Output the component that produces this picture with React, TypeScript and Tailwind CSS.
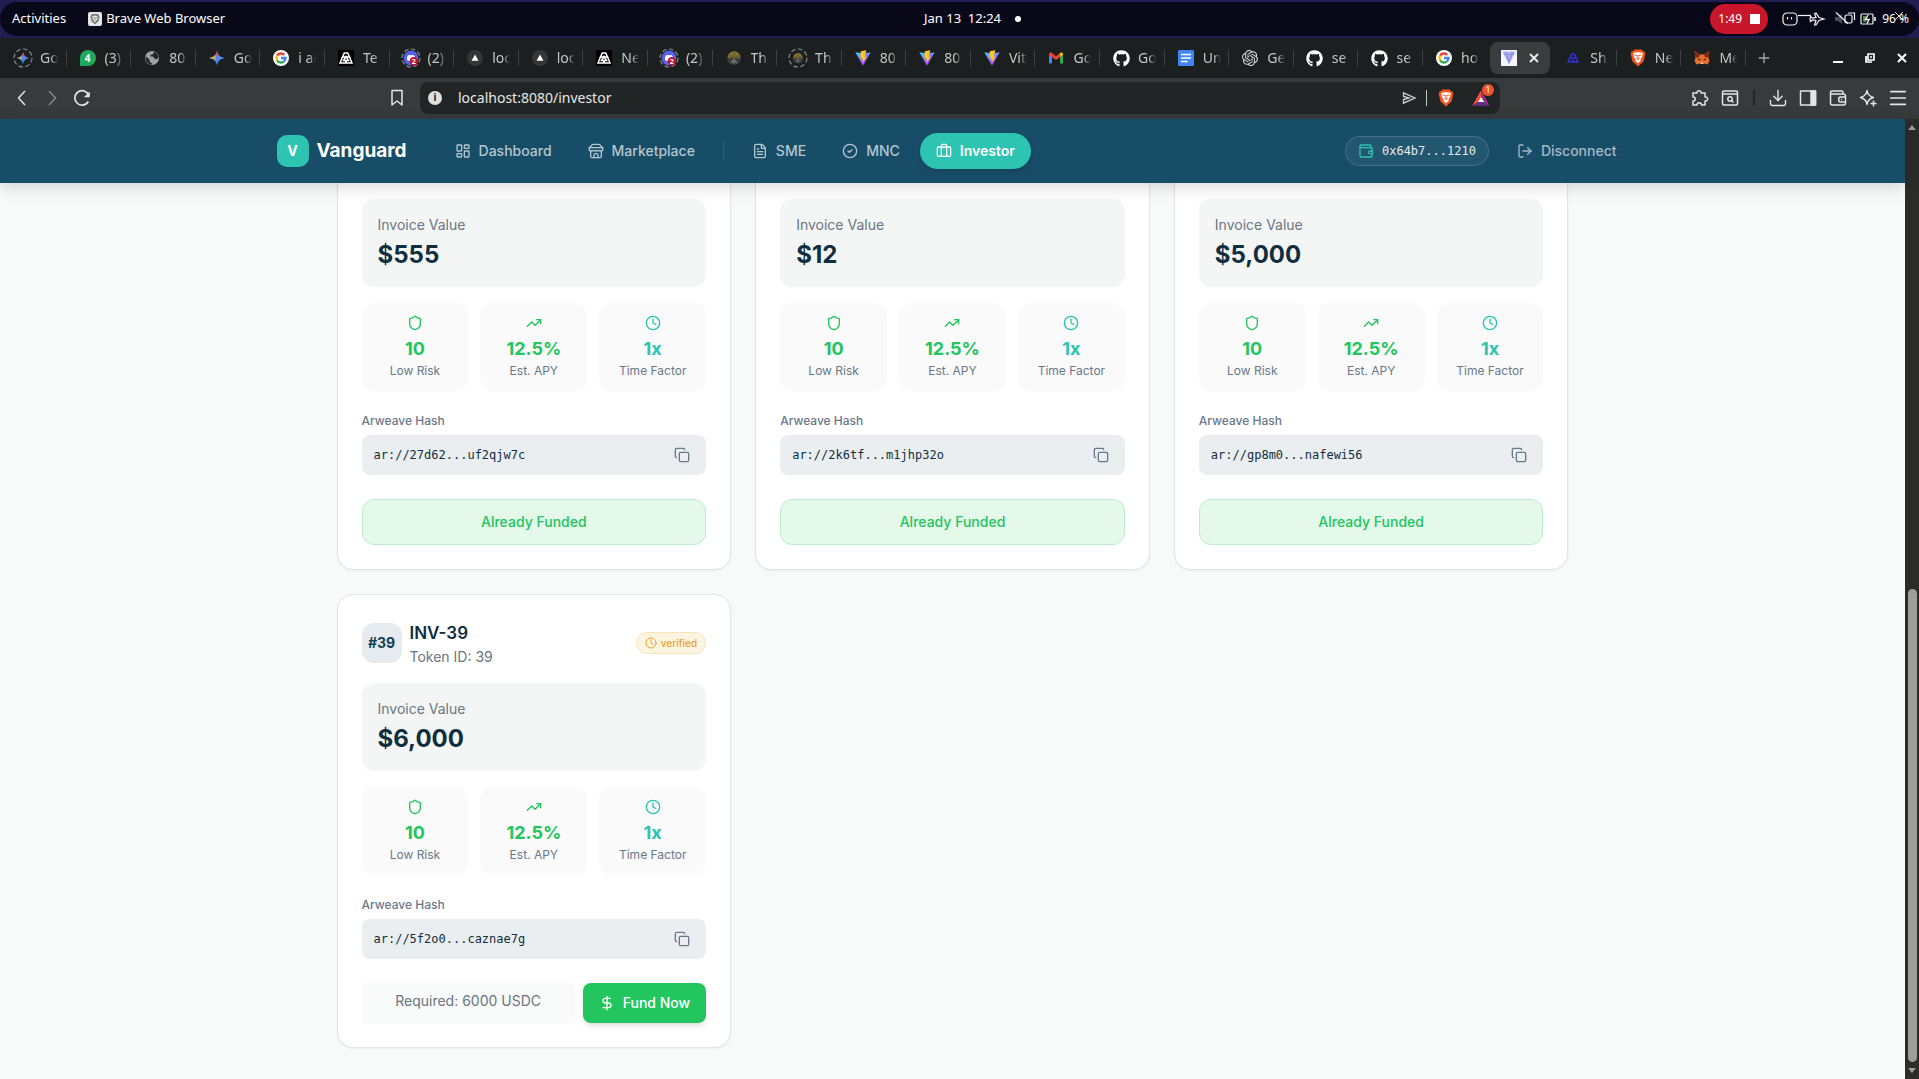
import type { ReactNode } from "react";
import {
    BadgeCheck,
    Briefcase,
    CircleCheck,
    Clock,
    Copy,
    DollarSign,
    Download,
    FileText,
    LayoutDashboard,
    LogOut,
    Menu,
    Plus,
    Shield,
    TrendingUp,
    Wallet,
} from "lucide-react";
import { FaGithub } from "react-icons/fa";
import { SiOpenai } from "react-icons/si";
import clsx from "clsx";

const UI_FONT = "font-['Noto_Sans',sans-serif]";
const MONO_FONT = "font-['DejaVu_Sans_Mono',monospace]";

/* ---------- favicons ---------- */

const LoadingRing = ({ children }: { children: ReactNode }) => (
    <svg viewBox="0 0 20 20" className="size-5">
        <circle cx="10" cy="10" r="9" fill="none" stroke="#85898b" strokeWidth="1.2" strokeDasharray="4.6 2.4" />
        {children}
    </svg>
);

const GEMINI_PATH = "M8 0C8.8 4.8 11.2 7.2 16 8C11.2 8.8 8.8 11.2 8 16C7.2 11.2 4.8 8.8 0 8C4.8 7.2 7.2 4.8 8 0Z";

const GeminiDefs = ({ id }: { id: string }) => (
    <defs>
        <linearGradient id={id} x1="0.5" y1="0" x2="0.6" y2="1">
            <stop offset="0.15" stopColor="#e8453c" />
            <stop offset="0.45" stopColor="#5b84ee" />
            <stop offset="0.75" stopColor="#3c8bf0" />
            <stop offset="1" stopColor="#27a567" />
        </linearGradient>
    </defs>
);

const GeminiIcon = () => (
    <svg viewBox="0 0 16 16" className="size-4">
        <GeminiDefs id="gemini" />
        <path d={GEMINI_PATH} fill="url(#gemini)" />
        <path d="M0 8C3 7.5 5 6.3 6.3 5L6.8 8L6.3 10.5C5 9.2 3 8.4 0 8Z" fill="#e5b52c" opacity="0.8" />
    </svg>
);

const GeminiLoadingIcon = () => (
    <LoadingRing>
        <GeminiDefs id="gemini-loading" />
        <path d={GEMINI_PATH} transform="translate(3.6 3.6) scale(0.8)" fill="url(#gemini-loading)" />
        <path d="M4 10C6 9.7 7.5 9 8.6 8L9 10L8.6 12C7.5 11 6 10.3 4 10Z" fill="#e5b52c" opacity="0.8" />
    </LoadingRing>
);

const WhatsAppIcon = () => (
    <span className="flex size-4 items-center justify-center rounded-full rounded-bl-xs bg-[#1fa95b] text-[10px] font-bold text-white">
        4
    </span>
);

const GlobeIcon = () => (
    <svg viewBox="0 0 16 16" className="size-4">
        <circle cx="8" cy="8" r="7" fill="#9ea1a3" />
        <path
            d="M2 6.5L5.5 9.5V11.5L8 13.5V14.5C4.5 14.5 1.8 12 1.5 8.5Z M10 1.8C12.5 2.6 14.2 4.7 14.5 7.2L12.5 9.5L10.5 8.5L9 6.5H6.5V5L9 4.2Z"
            fill="#222628"
        />
    </svg>
);

const GoogleIcon = () => (
    <svg viewBox="0 0 16 16" className="size-4">
        <circle cx="8" cy="8" r="8" fill="#fff" />
        <g fill="none" strokeWidth="2.4">
            <path d="M4.1 5.7A4.5 4.5 0 0 1 11.3 4.9" stroke="#ea4335" />
            <path d="M4.1 10.3A4.5 4.5 0 0 1 4.1 5.7" stroke="#fbbc05" />
            <path d="M11 11.4A4.5 4.5 0 0 1 4.1 10.3" stroke="#34a853" />
            <path d="M8 8H12.5A4.5 4.5 0 0 1 11 11.4" stroke="#4285f4" />
        </g>
    </svg>
);

const TriangleFrameIcon = () => (
    <svg viewBox="0 0 16 16" className="size-4">
        <rect width="16" height="16" fill="#000" />
        <g fill="none" stroke="#fff" strokeWidth="1.5">
            <path d="M6.3 3H9.7L11.5 7H4.5Z" />
            <path d="M4.5 7L2 13H7.5L8 10.5L8.5 13H14L11.5 7" />
            <path d="M8 6.5L5.5 10.5H10.5Z" />
        </g>
    </svg>
);

const DiscordIcon = () => (
    <LoadingRing>
        <circle cx="10" cy="10" r="7.4" fill="#5563ea" />
        <path d="M6 12C5.7 9.5 6.5 7.5 7.5 7L10 7.3L12.5 7C13.5 7.5 14.3 9.5 14 12L12 13H8Z" fill="#fff" />
        <circle cx="12.8" cy="13.3" r="4.2" fill="#c8102e" />
        <text x="12.8" y="15.9" fontSize="7" fontWeight="700" textAnchor="middle" fill="#fff">2</text>
    </LoadingRing>
);

const VercelIcon = () => (
    <svg viewBox="0 0 16 16" className="size-4">
        <circle cx="8" cy="8" r="8" fill="#343536" />
        <path d="M8 4.5L11.5 10.8H4.5Z" fill="#fff" />
    </svg>
);

const TreeShape = () => (
    <>
        <circle cx="8" cy="8" r="7" fill="#3b3d3c" />
        <path d="M2 7.5C2 3.5 5 1.5 8 1.5S14 3.5 14 7.5C12.5 9 10.5 8.5 8 8.5S3.5 9 2 7.5Z" fill="#85762d" />
        <path d="M4 5L8 9L12 5M8 3V9M3 7L8 9.5L13 7" fill="none" stroke="#37382c" strokeWidth="0.8" />
        <path d="M8 8V14M5 13L8 10L11 13" fill="none" stroke="#74777b" strokeWidth="1.3" />
    </>
);

const TreeIcon = () => (
    <svg viewBox="0 0 16 16" className="size-4">
        <TreeShape />
    </svg>
);

const TreeLoadingIcon = () => (
    <LoadingRing>
        <g transform="translate(4 4) scale(0.75)">
            <TreeShape />
        </g>
    </LoadingRing>
);

const ViteIcon = () => (
    <svg viewBox="0 0 16 16" className="size-4">
        <defs>
            <linearGradient id="vite" x1="0" y1="0" x2="0.6" y2="1">
                <stop offset="0" stopColor="#41d1ff" />
                <stop offset="1" stopColor="#bd34fe" />
            </linearGradient>
        </defs>
        <path d="M0.3 2.2L8 15.8L15.7 2.2L8.5 3.5Z" fill="url(#vite)" />
        <path d="M11.4 0.2L5.8 1.3L5.4 7.7L7.2 7.3L6.7 10L8.2 9.6L7.5 13.2L11.6 6.5L9.8 6.8Z" fill="#ffc71f" />
    </svg>
);

const FadedViteIcon = () => (
    <svg viewBox="0 0 16 16" className="size-4">
        <rect width="16" height="16" fill="#f4f4fc" />
        <path d="M1.5 1.5H14.5L8 14.5Z" fill="#b9a9ee" />
        <path d="M4.5 2L8 12L11.5 2M3 4.5H13" fill="none" stroke="#7e9cdc" strokeWidth="1.2" />
    </svg>
);

const GmailIcon = () => (
    <svg viewBox="0 0 16 16" className="size-4">
        <path d="M1 4V13.5H4V7Z" fill="#4285f4" />
        <path d="M15 4V13.5H12V7Z" fill="#34a853" />
        <path d="M1 3.5C1.5 2.3 3 2.3 4 3L8 6.2L12 3V7L8 10L4 7L1 5Z" fill="#ea4335" />
        <path d="M12 3C13 2.3 14.5 2.3 15 3.5V5L12 7Z" fill="#fbbc04" />
    </svg>
);

const DocsIcon = () => (
    <svg viewBox="0 0 16 16" className="size-4">
        <rect width="16" height="16" rx="1.5" fill="#4285f4" />
        <path d="M3 4.5H13M3 8H13M3 11.5H9.5" stroke="#fff" strokeWidth="1.6" />
    </svg>
);

const BraveIcon = () => (
    <svg viewBox="0 0 16 18" className="h-[18px] w-4">
        <path d="M4.5 0.5H11.5L13.2 2.2L14.6 2.4L15.3 5L13.5 12.5L8 17.5L2.5 12.5L0.7 5L1.4 2.4L2.8 2.2Z" fill="#f2541b" />
        <path d="M8 3L12.8 4L12 8.2L10.5 10L10.8 11.5L8 14.3L5.2 11.5L5.5 10L4 8.2L3.2 4Z" fill="#fff" />
        <path d="M4.5 5.8L7 6.6M11.5 5.8L9 6.6M8 6V10.5M6.3 9L8 10.5L9.7 9" fill="none" stroke="#f2541b" />
    </svg>
);

const BlueTriangleIcon = () => (
    <svg viewBox="0 0 16 16" className="size-4" fill="none" stroke="#2d35d8" strokeWidth="1.6">
        <path d="M6.8 4H9.2L11 8H5Z" />
        <path d="M5 8L3.2 12H7.2L8 10.5L8.8 12H12.8L11 8" />
    </svg>
);

const MetaMaskIcon = () => (
    <svg viewBox="0 0 16 16" className="size-4">
        <path d="M0.5 1L6 4.5H10L15.5 1L14.5 8L15.5 11L13.5 14.5L10 13.5H6L2.5 14.5L0.5 11L1.5 8Z" fill="#ec6f2d" />
        <path d="M0.5 1L6 4.5L5 7L1.5 8Z M15.5 1L10 4.5L11 7L14.5 8Z" fill="#7b2d1a" />
        <path d="M4 9L6.5 10M12 9L9.5 10" stroke="#252525" strokeWidth="1.2" />
        <path d="M6.5 12.5H9.5V14H6.5Z" fill="#d9c6ba" />
    </svg>
);

const GithubIcon = () => <FaGithub className="size-[17px] text-white" />;
const OpenAiIcon = () => <SiOpenai className="size-4 text-[#d5d7d8]" />;

/* ---------- browser chrome ---------- */

type BrowserTab = {
    title: string;
    icon: () => ReactNode;
};

const TABS_LEFT: BrowserTab[] = [
    { title: "Go", icon: GeminiLoadingIcon },
    { title: "(3)", icon: WhatsAppIcon },
    { title: "80", icon: GlobeIcon },
    { title: "Go", icon: GeminiIcon },
    { title: "i ar", icon: GoogleIcon },
    { title: "Te", icon: TriangleFrameIcon },
    { title: "(2)", icon: DiscordIcon },
    { title: "loc", icon: VercelIcon },
    { title: "loc", icon: VercelIcon },
    { title: "Ne", icon: TriangleFrameIcon },
    { title: "(2)", icon: DiscordIcon },
    { title: "Th", icon: TreeIcon },
    { title: "Th", icon: TreeLoadingIcon },
    { title: "80", icon: ViteIcon },
    { title: "80", icon: ViteIcon },
    { title: "Vit", icon: ViteIcon },
    { title: "Go", icon: GmailIcon },
    { title: "Go", icon: GithubIcon },
    { title: "Un", icon: DocsIcon },
    { title: "Ge", icon: OpenAiIcon },
    { title: "se", icon: GithubIcon },
    { title: "se", icon: GithubIcon },
    { title: "ho", icon: GoogleIcon },
];

const TABS_RIGHT: BrowserTab[] = [
    { title: "Sh", icon: BlueTriangleIcon },
    { title: "Ne", icon: BraveIcon },
    { title: "Me", icon: MetaMaskIcon },
];

const CloseGlyph = () => (
    <svg viewBox="0 0 10 10" className="size-2.5" stroke="currentColor" strokeWidth="2">
        <path d="M1 1L9 9M9 1L1 9" />
    </svg>
);

const TabButton = ({ tab, divider = true }: { tab: BrowserTab; divider?: boolean }) => {
    const Icon = tab.icon;
    return (
        <button type="button" className="flex min-w-0 items-center pl-[11px]">
            <span className="flex size-5 shrink-0 items-center justify-center">
                <Icon />
            </span>
            <span className="ml-[7px] w-[18px] overflow-hidden text-left text-sm whitespace-nowrap text-[#c3c5c6] [mask-image:linear-gradient(to_right,#000_60%,transparent)]">
                {tab.title}
            </span>
            {divider && <span className="ml-auto h-4 w-px bg-[#3d4143]" />}
        </button>
    );
};

const SystemBar = () => (
    <div className={clsx("h-[38px] shrink-0 border-y-2 border-[#221c55] bg-[#221c55] text-[13px] text-white", UI_FONT)}>
        <div className="grid h-full grid-cols-[1fr_auto_1fr] items-center rounded-full bg-[#080818] pr-2.5 pl-3">
            <div className="flex items-center gap-[22px]">
                <button type="button">Activities</button>
                <button type="button" className="flex items-center gap-1">
                    <svg viewBox="0 0 14 14" className="size-3.5">
                        <rect width="14" height="14" rx="2" fill="#e6e6e6" />
                        <path d="M4 2H10L11.5 4.5L10.5 9L7 12.5L3.5 9L2.5 4.5Z" fill="#777" />
                        <path d="M7 3.5L10 4.5L9 7.5L7 10.5L5 7.5L4 4.5Z" fill="#eee" />
                        <path d="M5 5.5H6.5M7.5 5.5H9M7 6V8.5" stroke="#777" />
                    </svg>
                    Brave Web Browser
                </button>
            </div>
            <div className="flex items-center gap-3.5 pl-6">
                <span>Jan 13&nbsp; 12:24</span>
                <span className="size-1.5 rounded-full bg-white" />
            </div>
            <div className="flex items-center justify-end">
                <button type="button" className="mr-3.5 flex h-[30px] w-[58px] items-center justify-center gap-2 rounded-full bg-[#c8162b] text-xs">
                    1:49
                    <span className="size-2.5 bg-white" />
                </button>
                <svg viewBox="0 0 96 20" className="mr-1 h-5 w-24" fill="none" stroke="#f2f2f2" strokeWidth="1.2">
                    <rect x="1" y="4" width="14" height="12" rx="4" />
                    <path d="M5.5 8V10.5M9.5 8V10.5" />
                    <path d="M16 6.5H29" />
                    <path d="M42 10L37 8.5L34 4L32.5 4.5L34 8.5L30.5 9L28.5 7.5L28 10L28.5 12.5L30.5 11L34 11.5L32.5 16L34 16L37 11.5Z" />
                    <path d="M53 8H56L60 5V15L56 12H53Z" fill="#4a4b58" stroke="none" />
                    <path d="M54 3.5L66 14.5" />
                    <rect x="63" y="6" width="7" height="8" rx="1.5" />
                    <path d="M66 4H72.5V11" />
                    <rect x="79" y="5" width="12" height="10" rx="1" />
                    <path d="M93 8V12" strokeWidth="1.6" />
                    <path d="M81 7H84V13H81Z" fill="#3b9b38" stroke="none" />
                    <path d="M86 6L83.5 10.5H87L85 14.5" strokeWidth="1.5" />
                </svg>
                <span className="relative text-xs">
                    96 %
                    <svg viewBox="0 0 10 10" className="absolute top-0 left-3 size-2.5" stroke="#ddd" strokeWidth="1">
                        <path d="M1 1L9 9M9 1L1 9" />
                    </svg>
                </span>
            </div>
        </div>
    </div>
);

const TabStrip = () => (
    <div className={clsx("flex h-10 shrink-0 bg-[#1c1f20] pl-0.5", UI_FONT)}>
        <div className="grid min-w-0 flex-1 auto-cols-fr grid-flow-col">
            {TABS_LEFT.map((tab, index) => (
                <TabButton key={index} tab={tab} divider={index < TABS_LEFT.length - 1} />
            ))}
            <button
                type="button"
                aria-label="Vanguard"
                className="mx-0.5 my-1 flex min-w-0 items-center justify-center gap-3 rounded-lg bg-[#3a3d3e] text-[#e8e9e9]"
            >
                <FadedViteIcon />
                <CloseGlyph />
            </button>
            {TABS_RIGHT.map((tab) => (
                <TabButton key={tab.title} tab={tab} />
            ))}
        </div>
        <div className="flex w-[173px] items-center justify-between pr-3">
            <button type="button" aria-label="New tab" className="ml-2.5 text-[#a5a7a8]">
                <Plus className="size-4" />
            </button>
            <div className="flex items-center gap-[22px] text-white">
                <button type="button" aria-label="Minimize" className="flex h-2.5 items-end">
                    <span className="h-0.5 w-2.5 bg-white" />
                </button>
                <button type="button" aria-label="Restore">
                    <svg viewBox="0 0 10 10" className="size-2.5" fill="none" stroke="currentColor" strokeWidth="1.7">
                        <path d="M3 1H9V7H3Z" />
                        <path d="M1 3V9H7" />
                        <path d="M5 4H7" />
                    </svg>
                </button>
                <button type="button" aria-label="Close window">
                    <CloseGlyph />
                </button>
            </div>
        </div>
    </div>
);

const ToolbarIcon = ({ label, children }: { label: string; children: ReactNode }) => (
    <button type="button" aria-label={label} className="flex w-[30px] items-center justify-center">
        <svg viewBox="0 0 18 18" className="size-[18px]" fill="none" stroke="currentColor" strokeWidth="1.5" strokeLinejoin="round">
            {children}
        </svg>
    </button>
);

const Toolbar = () => (
    <div className={clsx("flex h-[41px] shrink-0 items-center bg-[#383b3c] pb-0.5 text-[#e3e4e4]", UI_FONT)}>
        <div className="flex w-[420px] items-center justify-between pr-2 pl-[7px]">
            <div className="flex">
                <ToolbarIcon label="Back">
                    <path d="M12 2L5.5 9L12 16" />
                </ToolbarIcon>
                <ToolbarIcon label="Forward">
                    <path d="M6 2L12.5 9L6 16" stroke="#858889" />
                </ToolbarIcon>
                <ToolbarIcon label="Reload">
                    <path d="M15.3 12.5A7.2 7.2 0 1 1 16 7" strokeWidth="1.7" />
                    <path d="M16.5 3V8H11.5Z" fill="currentColor" strokeWidth="0.5" />
                </ToolbarIcon>
            </div>
            <ToolbarIcon label="Bookmark">
                <path d="M4 1.5H14V16L9 12L4 16Z" />
            </ToolbarIcon>
        </div>
        <div className="flex h-8 min-w-0 flex-1 items-center rounded-lg bg-[#222526] pl-2">
            <span className="flex size-3.5 items-center justify-center rounded-full bg-[#dedfdf] text-[10px] font-bold text-[#222526]">
                i
            </span>
            <input
                aria-label="Address"
                defaultValue="localhost:8080/investor"
                className="ml-4 min-w-0 flex-1 bg-transparent text-sm text-[#e6e7e7] outline-none"
            />
            <button type="button" aria-label="Share" className="mr-2.5">
                <svg viewBox="0 0 14 14" className="size-3.5" fill="none" stroke="#cfd0d1" strokeWidth="1.3">
                    <path d="M1.5 1.8L13 7L1.5 12.2V8.5L7 7L1.5 5.5Z" />
                </svg>
            </button>
            <span className="h-4 w-px bg-[#c5c6c7]" />
            <button type="button" aria-label="Brave Shields" className="ml-[11px]">
                <BraveIcon />
            </button>
            <button type="button" aria-label="Brave Rewards" className="relative mr-2.5 ml-[18px]">
                <svg viewBox="0 0 18 16" className="h-4 w-[18px]">
                    <path d="M9 0.5L0.5 15.5H17.5Z" fill="#9e2f82" />
                    <path d="M9 0.5L0.5 15.5L6 12L9 7Z" fill="#f0502a" />
                    <path d="M0.5 15.5H17.5L12 12H6Z" fill="#5f2d86" />
                    <path d="M9 7L6 12H12Z" fill="#fff" />
                </svg>
                <span className="absolute -top-1.5 -right-1 flex size-3 items-center justify-center rounded-full bg-[#f0532d] text-[9px] text-white">
                    1
                </span>
            </button>
        </div>
        <div className="flex w-[419px] items-center justify-end pr-1.5">
            <ToolbarIcon label="Extensions">
                <path d="M2 4H6C5.5 1 10.5 1 10 4H14V8C17.5 7.5 17.5 12.5 14 12V16H10.5C10.5 13 6 13 6 16H2V12C5 12 5 8 2 8Z" />
            </ToolbarIcon>
            <ToolbarIcon label="Search tabs">
                <rect x="1.5" y="2" width="15" height="14" rx="1.5" />
                <path d="M1.5 5H16.5" />
                <circle cx="9" cy="10" r="2.2" />
                <path d="M10.5 11.5L12.5 13.5" />
            </ToolbarIcon>
            <span className="mr-2 ml-2 h-4 w-0.5 bg-[#222526]" />
            <button type="button" aria-label="Downloads" className="flex w-[30px] justify-center">
                <Download className="size-5" strokeWidth={1.7} />
            </button>
            <ToolbarIcon label="Sidebar">
                <path d="M1.5 2H16.5V16H1.5Z" />
                <path d="M12 2H16.5V16H12Z" fill="currentColor" />
            </ToolbarIcon>
            <ToolbarIcon label="Wallet">
                <path d="M14 5V3.5C14 2.5 13.5 2 12.5 2H3C2 2 1.5 2.5 1.5 3.5V14C1.5 15.3 2.3 16 3.5 16H14.5C15.8 16 16.5 15.3 16.5 14V7C16.5 5.7 15.8 5 14.5 5H1.5" />
                <path d="M16.5 8H11.5C9 8 9 13 11.5 13H16.5M12 10.5H13" />
            </ToolbarIcon>
            <ToolbarIcon label="Leo AI">
                <path d="M8 1.5C8.5 5.5 10.5 7.5 14.5 8.5C10.5 9.5 8.5 11.5 8 15.5C7.5 11.5 5.5 9.5 1.5 8.5C5.5 7.5 7.5 5.5 8 1.5Z" />
                <path d="M14.5 11.5V17.5M11.5 14.5H17.5" />
            </ToolbarIcon>
            <button type="button" aria-label="Menu" className="flex w-[30px] justify-center">
                <Menu className="size-[22px]" strokeWidth={1.8} />
            </button>
        </div>
    </div>
);

/* ---------- page ---------- */

const NAV_LINK = "flex h-9 items-center gap-2 rounded-full px-4 text-sm";

const StoreIcon = () => (
    <svg
        viewBox="0 0 24 24"
        className="size-4"
        fill="none"
        stroke="currentColor"
        strokeWidth="2"
        strokeLinecap="round"
        strokeLinejoin="round"
    >
        <path d="m2 7 4.41-4.41A2 2 0 0 1 7.83 2h8.34a2 2 0 0 1 1.42.59L22 7" />
        <path d="M4 12v8a2 2 0 0 0 2 2h12a2 2 0 0 0 2-2v-8" />
        <path d="M15 22v-4a2 2 0 0 0-2-2h-2a2 2 0 0 0-2 2v4" />
        <path d="M2 7h20" />
        <path d="M22 7v3a2 2 0 0 1-2 2a2.7 2.7 0 0 1-1.59-.63.7.7 0 0 0-.82 0A2.7 2.7 0 0 1 16 12a2.7 2.7 0 0 1-1.59-.63.7.7 0 0 0-.82 0A2.7 2.7 0 0 1 12 12a2.7 2.7 0 0 1-1.59-.63.7.7 0 0 0-.82 0A2.7 2.7 0 0 1 8 12a2.7 2.7 0 0 1-1.59-.63.7.7 0 0 0-.82 0A2.7 2.7 0 0 1 4 12a2 2 0 0 1-2-2V7" />
    </svg>
);

const SiteHeader = () => (
    <header className="z-10 shrink-0 bg-[#184d68] shadow-[0_4px_16px_rgba(0,0,0,0.15)]">
        <div className="mx-auto flex h-16 max-w-[1400px] items-center justify-between px-6">
            <div className="flex items-center gap-8">
                <a href="#home" className="flex items-center gap-2 text-[19px] font-bold text-white">
                    <span className="flex size-8 items-center justify-center rounded-[10px] bg-[#2ec4b2] text-sm">V</span>
                    Vanguard
                </a>
                <nav className="flex items-center gap-1 text-[#b3c5ce]">
                    <a href="#dashboard" className={clsx(NAV_LINK, "font-medium")}>
                        <LayoutDashboard className="size-4" />
                        Dashboard
                    </a>
                    <a href="#marketplace" className={clsx(NAV_LINK, "font-medium")}>
                        <StoreIcon />
                        Marketplace
                    </a>
                    <span className="mx-2 h-5 w-px bg-white/10" />
                    <a href="#sme" className={clsx(NAV_LINK, "font-medium")}>
                        <FileText className="size-4" />
                        SME
                    </a>
                    <a href="#mnc" className={clsx(NAV_LINK, "font-medium")}>
                        <CircleCheck className="size-4" />
                        MNC
                    </a>
                    <a href="#investor" className={clsx(NAV_LINK, "bg-[#2ec4b2] font-semibold text-white shadow-md")}>
                        <Briefcase className="size-4" />
                        Investor
                    </a>
                </nav>
            </div>
            <div className="flex items-center gap-4">
                <div className="flex h-[30px] items-center gap-2 rounded-full border border-white/15 bg-white/5 px-3">
                    <Wallet className="size-4 text-[#2ec4b2]" />
                    <span className={clsx("text-xs text-[#e3eaed]", MONO_FONT)}>0x64b7...1210</span>
                </div>
                <button type="button" className="flex h-9 items-center gap-2 px-3 text-sm font-medium text-[#a3b8c3]">
                    <LogOut className="size-4" />
                    Disconnect
                </button>
            </div>
        </div>
    </header>
);

type Invoice = {
    id: number;
    value: number;
    hash: string;
    funded: boolean;
};

const INVOICES: Invoice[] = [
    { id: 36, value: 555, hash: "ar://27d62...uf2qjw7c", funded: true },
    { id: 37, value: 12, hash: "ar://2k6tf...m1jhp32o", funded: true },
    { id: 38, value: 5000, hash: "ar://gp8m0...nafewi56", funded: true },
    { id: 39, value: 6000, hash: "ar://5f2o0...caznae7g", funded: false },
];

type MetricProps = {
    icon: ReactNode;
    value: string;
    label: string;
    className: string;
};

const Metric = ({ icon, value, label, className }: MetricProps) => (
    <div className={clsx("flex flex-col items-center rounded-xl bg-[#f9faf9] p-3", className)}>
        {icon}
        <p className="mt-1 text-lg font-bold">{value}</p>
        <p className="text-xs text-[#6a788b]">{label}</p>
    </div>
);

const InvoiceCard = ({ invoice }: { invoice: Invoice }) => (
    <article className="rounded-2xl border border-[#e1e6e5] bg-[#fefffe] p-6 shadow-xs">
        {!invoice.funded && (
            <div className="flex items-center justify-between">
                <div className="flex items-center gap-2">
                    <span className="flex size-10 items-center justify-center rounded-xl bg-[#e5ebee] text-sm font-bold text-[#134259]">
                        #{invoice.id}
                    </span>
                    <div>
                        <h3 className="text-[17px] leading-7 font-semibold">INV-{invoice.id}</h3>
                        <p className="text-sm text-[#6b7582]">Token ID: {invoice.id}</p>
                    </div>
                </div>
                <span className="flex items-center gap-1 rounded-full border border-[#fbe3b8] bg-[#fdf4e2] px-2 py-0.5 text-[10px] leading-4 font-medium text-[#efa02c]">
                    <Clock className="size-3" />
                    verified
                </span>
            </div>
        )}

        <div className="mt-4 rounded-xl bg-[#f4f6f5] p-4">
            <p className="text-sm text-[#6b7582]">Invoice Value</p>
            <p className="mt-1 text-2xl font-bold">${invoice.value.toLocaleString("en-US")}</p>
        </div>

        <div className="mt-4 grid grid-cols-3 gap-3">
            <Metric icon={<Shield className="size-4" />} value="10" label="Low Risk" className="text-[#22c55e]" />
            <Metric icon={<TrendingUp className="size-4" />} value="12.5%" label="Est. APY" className="text-[#22c55e]" />
            <Metric icon={<Clock className="size-4" />} value="1x" label="Time Factor" className="text-[#2ec4b2]" />
        </div>

        <p className="mt-5 mb-1 text-xs leading-5 font-medium text-[#6a788b]">Arweave Hash</p>
        <div className="flex h-10 items-center justify-between rounded-lg bg-[#ebeef0] px-3">
            <code className={clsx("text-xs", MONO_FONT)}>{invoice.hash}</code>
            <button type="button" aria-label="Copy hash" className="p-1 text-[#6a788b]">
                <Copy className="size-4" />
            </button>
        </div>

        {invoice.funded ? (
            <div className="mt-6 flex h-[46px] items-center justify-center rounded-xl border border-[#bdeccd] bg-[#e5f9eb] text-sm font-medium text-[#22c55e]">
                Already Funded
            </div>
        ) : (
            <div className="mt-6 flex gap-2">
                <p className="flex-1 bg-[#f9fafa] py-2 text-center text-sm text-[#6b7582]">
                    Required: {invoice.value} USDC
                </p>
                <button
                    type="button"
                    className="flex h-10 items-center gap-2 rounded-lg bg-[#22c55e] px-4 text-sm font-medium text-white shadow-md"
                >
                    <DollarSign className="size-4" />
                    Fund Now
                </button>
            </div>
        )}
    </article>
);

const Scrollbar = () => (
    <div className="flex w-3.5 shrink-0 flex-col items-center bg-[#2b2c2a] py-1.5">
        <svg viewBox="0 0 8 5" className="h-[5px] w-2">
            <path d="M4 0L8 5H0Z" fill="#9d9d9b" />
        </svg>
        <div className="mt-1 mb-1.5 flex w-[9px] flex-1 flex-col justify-end">
            <div className="h-[51%] rounded-full bg-[#9d9d9b]" />
        </div>
        <svg viewBox="0 0 8 5" className="h-[5px] w-2">
            <path d="M0 0H8L4 5Z" fill="#9d9d9b" />
        </svg>
    </div>
);

export default function App() {
    return (
        <div className="flex h-screen flex-col overflow-hidden font-['Inter',sans-serif] text-[#0f2f40]">
            <SystemBar />
            <TabStrip />
            <Toolbar />
            <div className="flex min-h-0 flex-1">
                <div className="flex min-w-0 flex-1 flex-col bg-[#f8faf9]">
                    <SiteHeader />
                    <main className="flex min-h-0 flex-1 flex-col justify-end overflow-hidden">
                        <div className="mx-auto grid w-full max-w-7xl grid-cols-3 gap-6 px-6 pb-[31px]">
                            {INVOICES.map((invoice) => (
                                <InvoiceCard key={invoice.id} invoice={invoice} />
                            ))}
                        </div>
                    </main>
                </div>
                <Scrollbar />
            </div>
        </div>
    );
}
